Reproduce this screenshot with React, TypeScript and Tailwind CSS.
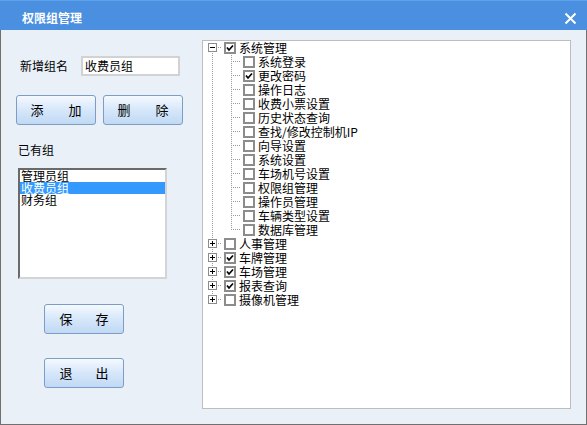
import React from "react";

interface Node {
  label: string;
  checked?: boolean;
  children?: Node[];
}

const tree: Node[] = [
  {
    label: "系统管理",
    checked: true,
    children: [
      { label: "系统登录" },
      { label: "更改密码", checked: true },
      { label: "操作日志" },
      { label: "收费小票设置" },
      { label: "历史状态查询" },
      { label: "查找/修改控制机IP" },
      { label: "向导设置" },
      { label: "系统设置" },
      { label: "车场机号设置" },
      { label: "权限组管理" },
      { label: "操作员管理" },
      { label: "车辆类型设置" },
      { label: "数据库管理" },
    ],
  },
  { label: "人事管理", children: [] },
  { label: "车牌管理", checked: true, children: [] },
  { label: "车场管理", checked: true, children: [] },
  { label: "报表查询", checked: true, children: [] },
  { label: "摄像机管理", children: [] },
];

const groups = ["管理员组", "收费员组", "财务组"];

const DOT = "#9a9a9a";

const Check = ({ checked }: { checked?: boolean }) => (
  <div className="mt-[1px] flex h-[12px] w-[12px] shrink-0 items-center justify-center border-2 border-[#8c8c8c] bg-white">
    {checked && (
      <svg width="8" height="8" viewBox="0 0 8 8">
        <polyline points="1,3.5 3,6 7,1.5" fill="none" stroke="#000" strokeWidth="1.7" />
      </svg>
    )}
  </div>
);

const RootLines = ({ first, last, open }: { first: boolean; last: boolean; open: boolean }) => (
  <svg width="19" height="14" className="shrink-0" shapeRendering="crispEdges">
    {!first && <line x1="9.5" y1="0" x2="9.5" y2="2" stroke={DOT} strokeDasharray="1 1" />}
    {!last && <line x1="9.5" y1="12" x2="9.5" y2="14" stroke={DOT} strokeDasharray="1 1" />}
    <line x1="15" y1="6.5" x2="19" y2="6.5" stroke={DOT} strokeDasharray="1 1" />
    <rect x="5.5" y="2.5" width="8" height="8" fill="#fff" stroke="#8c8c8c" />
    <line x1="7" y1="6.5" x2="12" y2="6.5" stroke="#000" />
    {!open && <line x1="9.5" y1="4" x2="9.5" y2="9" stroke="#000" />}
  </svg>
);

const ChildLines = ({ last }: { last: boolean }) => (
  <svg width="38" height="14" className="shrink-0" shapeRendering="crispEdges">
    <line x1="9.5" y1="0" x2="9.5" y2="14" stroke={DOT} strokeDasharray="1 1" />
    <line x1="28.5" y1="0" x2="28.5" y2={last ? 7 : 14} stroke={DOT} strokeDasharray="1 1" />
    <line x1="30" y1="6.5" x2="38" y2="6.5" stroke={DOT} strokeDasharray="1 1" />
  </svg>
);

const Button = ({ a, b, gap, h }: { a: string; b: string; gap: string; h: string }) => (
  <button
    className={`flex w-[80px] ${h} items-center justify-center ${gap} rounded-[3px] border border-[#7d9dc6] bg-gradient-to-b from-[#f5f9ff] via-[#d6e7fa] to-[#c0d9f4] text-[13px] text-black`}
  >
    <span>{a}</span>
    <span>{b}</span>
  </button>
);

export default function App() {
  return (
    <div
      className="flex h-[425px] w-[587px] flex-col overflow-hidden"
      style={{ fontFamily: '"Noto Sans CJK SC", "Liberation Sans", sans-serif' }}
    >
      <div className="flex h-[30px] shrink-0 items-center justify-between border-t border-[#5ea2ec] bg-[#4a8fe0] pl-[22px] pr-[10px] pt-[5px]">
        <span className="text-[12px] font-bold text-white">权限组管理</span>
        <svg width="13" height="13" viewBox="0 0 13 13">
          <path d="M1.5 1.5 L11.5 11.5 M11.5 1.5 L1.5 11.5" stroke="#fff" strokeWidth="2" />
        </svg>
      </div>

      <div className="flex flex-1 border-x border-b border-[#707070] bg-[#e9f0f8]">
        {/* left column */}
        <div className="flex w-[201px] shrink-0 flex-col">
          <div className="ml-[19px] mt-[26px] flex h-[20px] items-center">
            <span className="w-[61px] text-[12px] text-black">新增组名</span>
            <div className="flex h-[20px] w-[99px] items-center border-2 border-[#d2d2d2] bg-white pl-[2px] text-[12px] text-black">
              收费员组
            </div>
          </div>

          <div className="ml-[15px] mt-[19px] flex gap-[7px]">
            <Button a="添" b="加" gap="gap-[25px]" h="h-[30px]" />
            <Button a="删" b="除" gap="gap-[25px]" h="h-[30px]" />
          </div>

          <div className="ml-[17px] mt-[18px] text-[12px] leading-[14px] text-black">已有组</div>

          <div className="ml-[17px] mt-[11px] h-[111px] w-[149px] border-2 border-b-[#d4d4d4] border-l-[#6a6a6a] border-r-[#d4d4d4] border-t-[#6a6a6a] bg-white">
            {groups.map((g, i) => (
              <div
                key={g}
                className={`h-[12px] pl-[1px] text-[12px] leading-[12px] ${
                  i === 1 ? "bg-[#3399ff] text-white" : "text-black"
                }`}
              >
                {g}
              </div>
            ))}
          </div>

          <div className="ml-[43px] mt-[25px]">
            <Button a="保" b="存" gap="gap-[23px]" h="h-[30px]" />
          </div>
          <div className="ml-[43px] mt-[24px]">
            <Button a="退" b="出" gap="gap-[23px]" h="h-[30px]" />
          </div>
        </div>

        {/* tree */}
        <div className="mt-[10px] h-[369px] w-[369px] border border-[#bdbdbd] bg-white">
          {tree.map((n, i) => {
            const open = (n.children?.length ?? 0) > 0;
            return (
              <div key={n.label}>
                <div className="flex h-[14px] items-start">
                  <RootLines first={i === 0} last={i === tree.length - 1} open={open} />
                  <div className="ml-[2px]">
                    <Check checked={n.checked} />
                  </div>
                  <span className="ml-[3px] whitespace-nowrap text-[12px] leading-[14px] text-black">
                    {n.label}
                  </span>
                </div>
                {n.children?.map((c, j) => (
                  <div key={c.label} className="flex h-[14px] items-start">
                    <ChildLines last={j === n.children!.length - 1} />
                    <div className="ml-[2px]">
                      <Check checked={c.checked} />
                    </div>
                    <span className="ml-[3px] whitespace-nowrap text-[12px] leading-[14px] text-black">
                      {c.label}
                    </span>
                  </div>
                ))}
              </div>
            );
          })}
        </div>
      </div>
    </div>
  );
}
